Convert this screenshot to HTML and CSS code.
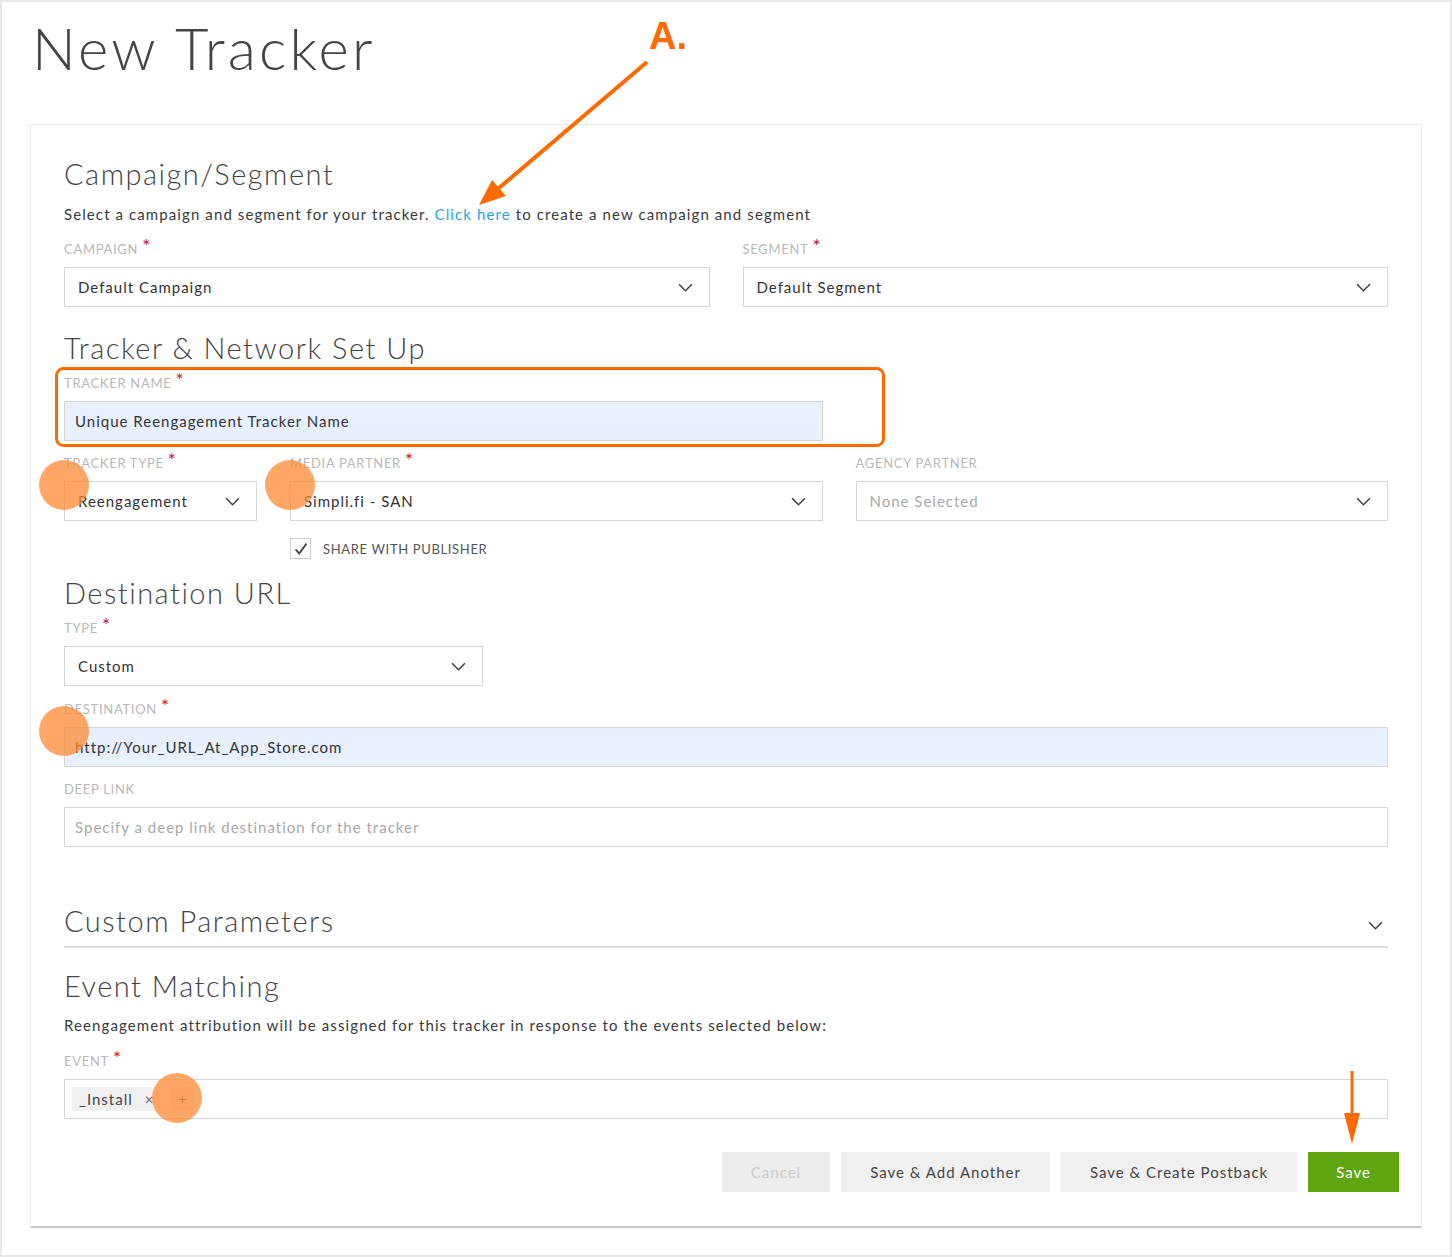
FILE: index.html
```html
<!DOCTYPE html>
<html lang="en">
<head>
    <meta charset="UTF-8">
    <title>New Tracker</title>
    <link rel="stylesheet" href="styles.css">
</head>
<body>
    <div class="page">
        <h1 class="page-title">New Tracker</h1>

        <div class="card">
            <!-- Campaign / Segment -->
            <h2 class="section-title">Campaign/Segment</h2>
            <p class="hint">Select a campaign and segment for your tracker. <a href="#" class="link">Click here</a> to create a new campaign and segment</p>
            <div class="row cols-2">
                <div class="field">
                    <label>Campaign<span class="req">*</span></label>
                    <div class="select"><span>Default Campaign</span><svg class="chev" viewBox="0 0 14 8"><path d="M1 1l6 6 6-6"/></svg></div>
                </div>
                <div class="field">
                    <label>Segment<span class="req">*</span></label>
                    <div class="select"><span>Default Segment</span><svg class="chev" viewBox="0 0 14 8"><path d="M1 1l6 6 6-6"/></svg></div>
                </div>
            </div>

            <!-- Tracker & Network -->
            <h2 class="section-title mt-heading">Tracker &amp; Network Set Up</h2>
            <div class="row cols-3">
                <div class="field span-2 first">
                    <label>Tracker Name<span class="req">*</span></label>
                    <div class="input filled">Unique Reengagement Tracker Name</div>
                </div>
            </div>
            <div class="row cols-3 partners">
                <div class="field">
                    <label>Tracker Type<span class="req">*</span></label>
                    <div class="select"><span>Reengagement</span><svg class="chev" viewBox="0 0 14 8"><path d="M1 1l6 6 6-6"/></svg></div>
                </div>
                <div class="field">
                    <label>Media Partner<span class="req">*</span></label>
                    <div class="select"><span>Simpli.fi - SAN</span><svg class="chev" viewBox="0 0 14 8"><path d="M1 1l6 6 6-6"/></svg></div>
                    <div class="check-row">
                        <span class="checkbox"><svg viewBox="0 0 20 20"><path d="M4 10.5l4 4.5 8-11"/></svg></span>
                        <span class="check-label">Share with Publisher</span>
                    </div>
                </div>
                <div class="field">
                    <label>Agency Partner</label>
                    <div class="select"><span class="placeholder">None Selected</span><svg class="chev" viewBox="0 0 14 8"><path d="M1 1l6 6 6-6"/></svg></div>
                </div>
            </div>

            <!-- Destination URL -->
            <h2 class="section-title mt-heading-sm">Destination URL</h2>
            <div class="row">
                <div class="field type-field">
                    <label>Type<span class="req">*</span></label>
                    <div class="select"><span>Custom</span><svg class="chev" viewBox="0 0 14 8"><path d="M1 1l6 6 6-6"/></svg></div>
                </div>
            </div>
            <div class="field">
                <label>Destination<span class="req">*</span></label>
                <div class="input filled">http://Your_URL_At_App_Store.com</div>
            </div>
            <div class="field deep-field">
                <label>Deep Link</label>
                <div class="input"><span class="placeholder">Specify a deep link destination for the tracker</span></div>
            </div>

            <!-- Custom Parameters -->
            <div class="collapse-head">
                <h2 class="section-title">Custom Parameters</h2>
                <svg class="chev" viewBox="0 0 14 8"><path d="M1 1l6 6 6-6"/></svg>
            </div>

            <!-- Event Matching -->
            <h2 class="section-title mt-event">Event Matching</h2>
            <p class="hint">Reengagement attribution will be assigned for this tracker in response to the events selected below:</p>
            <div class="field event-field">
                <label>Event<span class="req">*</span></label>
                <div class="tags-input">
                    <span class="tag">_Install<span class="tag-x">&times;</span></span>
                    <span class="tag-add">+</span>
                </div>
            </div>

            <div class="actions">
                <button class="btn btn-disabled">Cancel</button>
                <button class="btn">Save &amp; Add Another</button>
                <button class="btn">Save &amp; Create Postback</button>
                <button class="btn btn-primary">Save</button>
            </div>
        </div>

        <!-- Annotations drawn over the screenshot -->
        <svg class="annotations" width="1452" height="1257" viewBox="0 0 1452 1257">
            <text x="649" y="49" class="anno-label">A.</text>
            <line x1="647" y1="62" x2="499" y2="188" class="anno-line"/>
            <polygon points="479,205 492,180 506,196" class="anno-fill"/>
            <rect x="56.5" y="368.5" width="827" height="77" rx="7" class="anno-box"/>
            <line x1="1352" y1="1071" x2="1352" y2="1118" class="anno-line thin"/>
            <polygon points="1352,1144 1344,1113 1360,1113" class="anno-fill"/>
            <circle cx="64" cy="485" r="25" class="anno-dot"/>
            <circle cx="290" cy="485" r="25" class="anno-dot"/>
            <circle cx="64" cy="731" r="25" class="anno-dot"/>
            <circle cx="177" cy="1098" r="25" class="anno-dot"/>
        </svg>
    </div>
</body>
</html>
```

FILE: styles.css
```css
/* Base */
body {
    margin: 0;
    padding: 0;
    background-color: #ffffff;
    font-family: Lato, "Open Sans", sans-serif;
    color: #444;
}

.page {
    position: relative;
    width: 1452px;
    height: 1257px;
    box-sizing: border-box;
    border: 2px solid #e8e8e8;
    padding: 0 28px;
    background-color: #fff;
}

.page-title {
    margin: 11px 0 41px 2px;
    font-size: 58px;
    line-height: 70px;
    font-weight: 300;
    color: #444;
    letter-spacing: 3.2px;
}

/* Card */
.card {
    border: 1px solid #ebebeb;
    border-bottom: 2px solid #c8c8c8;
    padding: 32px 33px 34px 33px;
}

.section-title {
    margin: 0;
    font-size: 29px;
    line-height: 34px;
    font-weight: 300;
    color: #444;
    letter-spacing: 1.5px;
}

.mt-heading {
    margin-top: 24px;
}

.mt-heading-sm {
    margin-top: 17px;
}

.mt-event {
    margin-top: 21px;
}

.hint {
    margin: 13px 0 0 0;
    font-size: 15px;
    line-height: 20px;
    color: #3a3a3a;
    letter-spacing: 1.1px;
}

.mt-event + .hint {
    margin-top: 12px;
}

.link {
    color: #1fa6dd;
    text-decoration: none;
}

/* Form grid */
.row {
    display: grid;
    column-gap: 33px;
}

.cols-2 {
    grid-template-columns: 1fr 1fr;
}

.cols-3 {
    grid-template-columns: 193px 1fr 1fr;
}

.span-2 {
    grid-column: span 2;
}

.field {
    margin-top: 15px;
}

.cols-2 .field {
    margin-top: 17px;
}

.field.first {
    margin-top: 10px;
}

.partners .field {
    margin-top: 14px;
}

.type-field {
    width: 419px;
    margin-top: 10px;
}

.deep-field {
    margin-top: 14px;
}

.field label {
    display: block;
    font-size: 13px;
    line-height: 17px;
    text-transform: uppercase;
    color: #b9b9b9;
    margin-bottom: 9px;
    letter-spacing: 0.7px;
}

.req {
    color: #c8102e;
    margin-left: 4px;
    font-size: 19px;
    line-height: 10px;
    position: relative;
    top: -1px;
}

.select,
.input {
    height: 40px;
    box-sizing: border-box;
    border: 1px solid #d6d6d6;
    display: flex;
    align-items: center;
    font-size: 15px;
    color: #333;
    letter-spacing: 1px;
    background-color: #fff;
}

.select {
    justify-content: space-between;
    padding: 0 16px 0 13px;
}

.input {
    padding: 0 10px;
}

.input.filled {
    background-color: #e8f0fe;
}

.placeholder {
    color: #aaa;
}

.chev {
    width: 15px;
    height: 9px;
    fill: none;
    stroke: #444;
    stroke-width: 1.5;
}

/* Checkbox */
.check-row {
    display: flex;
    align-items: center;
    margin-top: 17px;
}

.checkbox {
    width: 21px;
    height: 21px;
    box-sizing: border-box;
    border: 1px solid #cfcfcf;
    display: flex;
    align-items: center;
    justify-content: center;
}

.checkbox svg {
    width: 18px;
    height: 18px;
    fill: none;
    stroke: #444;
    stroke-width: 2;
}

.check-label {
    margin-left: 12px;
    font-size: 13px;
    text-transform: uppercase;
    color: #555;
    letter-spacing: 0.65px;
}

/* Custom params */
.collapse-head {
    display: flex;
    justify-content: space-between;
    align-items: center;
    margin-top: 57px;
    padding-bottom: 8px;
    border-bottom: 2px solid #dedede;
}

.collapse-head .chev {
    margin-right: 5px;
    margin-top: 8px;
}

/* Tags */
.event-field {
    margin-top: 18px;
}

.tags-input {
    height: 40px;
    box-sizing: border-box;
    border: 1px solid #d6d6d6;
    display: flex;
    align-items: center;
    padding: 0 7px;
    gap: 8px;
}

.tag {
    height: 24px;
    display: flex;
    align-items: center;
    padding: 0 8px 0 7px;
    background-color: #f0f0f0;
    border-radius: 2px;
    font-size: 15px;
    color: #444;
    letter-spacing: 1px;
}

.tag-x {
    margin-left: 12px;
    color: #666;
    font-size: 15px;
}

.tag-add {
    width: 24px;
    height: 24px;
    display: flex;
    align-items: center;
    justify-content: center;
    background-color: #f0f0f0;
    color: #555;
    font-size: 13px;
}

/* Buttons */
.actions {
    display: flex;
    justify-content: flex-end;
    gap: 11px;
    margin-top: 33px;
    margin-right: -11px;
}

.btn {
    height: 40px;
    border: 0;
    padding: 0 29px;
    background-color: #f0f0f0;
    color: #444;
    font-family: Lato, "Open Sans", sans-serif;
    font-size: 15px;
    letter-spacing: 1px;
}

.btn-disabled {
    background-color: #ececec;
    color: #cccccc;
}

.btn-primary {
    background-color: #5ea510;
    color: #fff;
    padding: 0 28px;
}

/* Annotations */
.annotations {
    position: absolute;
    left: -2px;
    top: -2px;
    pointer-events: none;
}

.anno-label {
    font-family: "Liberation Sans", Arial, sans-serif;
    font-weight: bold;
    font-size: 38px;
    fill: #ff6a00;
}

.anno-line {
    stroke: #ff6a00;
    stroke-width: 4;
}

.anno-line.thin {
    stroke-width: 3;
}

.anno-fill {
    fill: #ff6a00;
}

.anno-box {
    fill: none;
    stroke: #ff6a00;
    stroke-width: 3;
}

.anno-dot {
    fill: #ff8a33;
    opacity: 0.75;
}
```
